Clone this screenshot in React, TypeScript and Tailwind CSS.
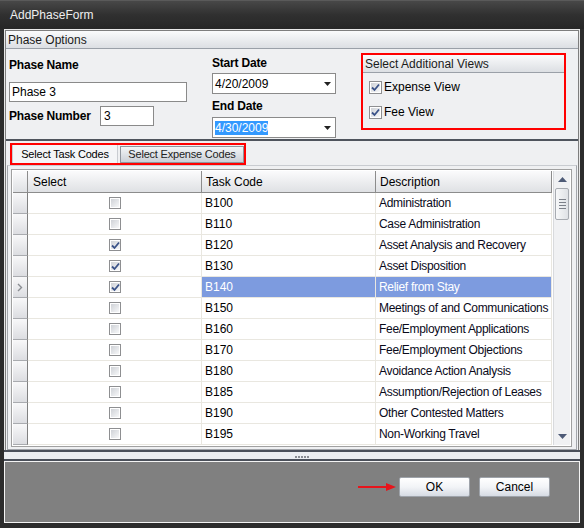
import React from 'react'

interface TaskRow {
  code: string
  desc: string
  checked: boolean
}

const rows: TaskRow[] = [
  { code: 'B100', desc: 'Administration', checked: false },
  { code: 'B110', desc: 'Case Administration', checked: false },
  { code: 'B120', desc: 'Asset Analysis and Recovery', checked: true },
  { code: 'B130', desc: 'Asset Disposition', checked: true },
  { code: 'B140', desc: 'Relief from Stay', checked: true },
  { code: 'B150', desc: 'Meetings of and Communications', checked: false },
  { code: 'B160', desc: 'Fee/Employment Applications', checked: false },
  { code: 'B170', desc: 'Fee/Employment Objections', checked: false },
  { code: 'B180', desc: 'Avoidance Action Analysis', checked: false },
  { code: 'B185', desc: 'Assumption/Rejection of Leases', checked: false },
  { code: 'B190', desc: 'Other Contested Matters', checked: false },
  { code: 'B195', desc: 'Non-Working Travel', checked: false },
]

const SELECTED = 'B140'

function CheckBox({ checked, big = false }: { checked: boolean; big?: boolean }) {
  return (
    <div
      className={`${big ? 'w-[13px] h-[13px]' : 'w-[12px] h-[12px]'} shrink-0 border border-[#8e8f91] bg-white p-[1px] flex`}
    >
      <div className="flex-1 bg-gradient-to-br from-[#cfd2d7] to-[#f7f8f9] flex items-center justify-center">
        {checked && (
          <svg width="9" height="9" viewBox="0 0 9 9">
            <path d="M1 4.5 L3.5 7 L8 1.5" fill="none" stroke="#3a5288" strokeWidth="1.8" />
          </svg>
        )}
      </div>
    </div>
  )
}

function HeaderBar({ children }: { children: React.ReactNode }) {
  return (
    <div className="h-[18px] shrink-0 flex items-center pl-[2px] bg-gradient-to-b from-[#fafbfc] to-[#dcdfe3] border-b border-[#9aa0a8] text-[12px] text-[#1b1b1b] whitespace-nowrap">
      {children}
    </div>
  )
}

function Combo({ value, selected = false }: { value: string; selected?: boolean }) {
  return (
    <div className="w-[124px] h-[21px] border border-[#8a8a8a] bg-white flex items-center pl-[2px] pr-[4px]">
      <span className={`text-[12px] leading-[14px] ${selected ? 'bg-[#3399ff] text-white' : 'text-black'}`}>{value}</span>
      <div className="flex-1" />
      <svg width="7" height="4" viewBox="0 0 7 4">
        <path d="M0 0 H7 L3.5 4 Z" fill="#222" />
      </svg>
    </div>
  )
}

function Button({ label }: { label: string }) {
  return (
    <button className="w-[71px] h-[20px] rounded-[2px] border border-[#9ea3aa] bg-gradient-to-b from-[#ffffff] via-[#f2f4f7] to-[#d6dbe3] text-[12px] text-black flex items-center justify-center">
      {label}
    </button>
  )
}

export default function App() {
  return (
    <div className="w-[584px] h-[528px] bg-[#2c2c2c] flex flex-col font-['Liberation_Sans',Arial,sans-serif] select-none">
      {/* Title */}
      <div className="h-[29px] shrink-0 flex items-center pl-[10px] bg-gradient-to-b from-[#484848] via-[#303030] to-[#262626] text-[12px] text-[#eeeeee] border-t border-[#5a5a5a]">
        AddPhaseForm
      </div>

      <div className="flex-1 flex flex-col px-[4px] pb-[5px]">
        {/* Top panel */}
        <div className="border border-[#e8e8e8] border-b-0 flex flex-col">
          <div className="border border-[#7e7e7e] border-b-0 bg-[#eff0f2] flex flex-col">
            <HeaderBar>Phase Options</HeaderBar>

            {/* Options */}
            <div className="h-[90px] flex pl-[3px]">
              <div className="w-[178px] flex flex-col">
                <div className="mt-[9px] h-[14px] text-[12px] font-bold leading-[14px] tracking-[-0.2px] text-black">Phase Name</div>
                <div className="mt-[10px] h-[20px] border border-[#8a8a8a] bg-white flex items-center pl-[2px] text-[12px] text-black">
                  Phase 3
                </div>
                <div className="mt-[4px] flex items-center">
                  <span className="w-[91px] text-[12px] font-bold tracking-[-0.2px] text-black">Phase Number</span>
                  <div className="w-[54px] h-[20px] border border-[#8a8a8a] bg-white flex items-center pl-[3px] text-[12px] text-black">
                    3
                  </div>
                </div>
              </div>

              <div className="ml-[25px] w-[124px] flex flex-col">
                <div className="mt-[7px] h-[14px] text-[12px] font-bold leading-[14px] tracking-[-0.2px] text-black">Start Date</div>
                <div className="mt-[3px]">
                  <Combo value="4/20/2009" />
                </div>
                <div className="mt-[5px] h-[14px] text-[12px] font-bold leading-[14px] tracking-[-0.2px] text-black">End Date</div>
                <div className="mt-[4px]">
                  <Combo value="4/30/2009" selected />
                </div>
              </div>

              <div className="ml-[25px] mt-[4px] w-[205px] h-[77px] border-2 border-[#ff0000] flex flex-col">
                <HeaderBar>Select Additional Views</HeaderBar>
                <div className="flex flex-col gap-[12px] pl-[6px] pt-[8px]">
                  <div className="h-[13px] flex items-center gap-[2px] text-[12px] leading-[13px] text-black">
                    <CheckBox checked big />
                    <span>Expense View</span>
                  </div>
                  <div className="h-[13px] flex items-center gap-[2px] text-[12px] leading-[13px] text-black">
                    <CheckBox checked big />
                    <span>Fee View</span>
                  </div>
                </div>
              </div>
            </div>

            <div className="h-[2px] bg-[#4f545d]" />

            {/* Tabs */}
            <div className="flex flex-col pl-[4px] pr-[1px] pt-[2px]">
              <div className="w-[236px] h-[22px] border-2 border-[#ff0000] flex items-end">
                <div className="w-[106px] h-[18px] self-start bg-[#f4f5f7] border-x border-[#c9ccd1] flex items-center justify-center text-[11px] tracking-[-0.2px] text-black whitespace-nowrap">
                  Select Task Codes
                </div>
                <div className="ml-[2px] w-[124px] h-[17px] border border-[#8f959d] bg-gradient-to-b from-[#f3f5f7] to-[#cbd0d7] flex items-center justify-center text-[11px] tracking-[-0.2px] text-[#222] whitespace-nowrap">
                  Select Expense Codes
                </div>
              </div>

              {/* Tab page */}
              <div className="-ml-[3px] border border-[#a3a6ab] border-t-[#c9ccd1] pt-[3px] pl-[3px] pr-[3px] pb-[2px] flex flex-col">
                <div className="w-[561px] border border-[#a0a0a0] bg-white p-[1px] flex">
                  <div className="flex-1 flex flex-col">
                    {/* Grid header */}
                    <div className="h-[22px] flex text-[12px] text-black">
                      <div className="w-[15px] bg-gradient-to-b from-[#fbfbfc] to-[#dfe1e4] border-r border-b border-[#8c8c8c]" />
                      <div className="w-[174px] pl-[5px] flex items-center bg-gradient-to-b from-[#fbfbfc] to-[#dfe1e4] border-r border-b border-[#8c8c8c]">
                        Select
                      </div>
                      <div className="w-[174px] pl-[4px] flex items-center bg-gradient-to-b from-[#fbfbfc] to-[#dfe1e4] border-r border-b border-[#8c8c8c]">
                        Task Code
                      </div>
                      <div className="flex-1 pl-[4px] flex items-center bg-gradient-to-b from-[#fbfbfc] to-[#dfe1e4] border-r border-b border-[#8c8c8c]">
                        Description
                      </div>
                    </div>

                    {/* Rows */}
                    {rows.map((r) => {
                      const sel = r.code === SELECTED
                      return (
                        <div key={r.code} className="h-[21px] flex text-[12px] leading-[14px]">
                          <div className="w-[15px] bg-gradient-to-b from-[#f8f8f9] to-[#dcdde1] border-r border-[#7f7f7f] border-b border-b-[#a9abaf] flex items-center justify-center">
                            {sel && (
                              <svg width="6" height="9" viewBox="0 0 6 9">
                                <path d="M1 1 L4.5 4.5 L1 8" fill="none" stroke="#8a8d92" strokeWidth="1.4" />
                              </svg>
                            )}
                          </div>
                          <div className="w-[174px] border-r border-b border-[#e9e7e0] flex items-center justify-center">
                            <CheckBox checked={r.checked} />
                          </div>
                          <div
                            className={`w-[174px] pl-[3px] border-r border-b border-[#e9e7e0] flex items-center ${sel ? 'bg-[#7d9bdf] text-white' : 'text-black'}`}
                          >
                            {r.code}
                          </div>
                          <div
                            className={`flex-1 min-w-0 pl-[3px] border-r border-b border-[#e9e7e0] flex items-center whitespace-nowrap overflow-hidden tracking-[-0.3px] ${sel ? 'bg-[#7d9bdf] text-white' : 'text-[#0a0a1a]'}`}
                          >
                            {r.desc}
                          </div>
                        </div>
                      )
                    })}
                  </div>

                  {/* Scrollbar */}
                  <div className="w-[17px] ml-[1px] bg-[#f0f1f3] border-l border-[#d8dadd] flex flex-col items-center">
                    <div className="h-[17px] flex items-center justify-center">
                      <svg width="9" height="5" viewBox="0 0 9 5">
                        <path d="M0 5 L4.5 0 L9 5 Z" fill="#4d5a76" />
                      </svg>
                    </div>
                    <div className="w-[14px] h-[32px] rounded-[2px] border border-[#a7abb1] bg-gradient-to-r from-[#f7f8f9] to-[#dfe2e6] flex flex-col items-center justify-center gap-[2px]">
                      <div className="w-[7px] h-[1px] bg-[#7b8089]" />
                      <div className="w-[7px] h-[1px] bg-[#7b8089]" />
                      <div className="w-[7px] h-[1px] bg-[#7b8089]" />
                      <div className="w-[7px] h-[1px] bg-[#7b8089]" />
                    </div>
                    <div className="flex-1" />
                    <div className="h-[17px] flex items-center justify-center">
                      <svg width="9" height="5" viewBox="0 0 9 5">
                        <path d="M0 0 L9 0 L4.5 5 Z" fill="#4d5a76" />
                      </svg>
                    </div>
                  </div>
                </div>
              </div>
            </div>
          </div>
        </div>

        {/* Splitter */}
        <div className="h-[11px] shrink-0 bg-[#eceef1] border-t-2 border-b-2 border-[#4b505a] flex items-end justify-center pb-[1px]">
          <div className="flex gap-[1px] ml-[20px]">
            {[0, 1, 2, 3, 4].map((i) => (
              <div key={i} className="w-[2px] h-[2px] bg-[#8a8d93]" />
            ))}
          </div>
        </div>

        {/* Bottom panel */}
        <div className="flex-1 border border-[#f4f4f4] bg-[#808080] flex items-start justify-end pt-[15px] pr-[29px]">
          <div className="flex items-center">
            <svg width="40" height="10" viewBox="0 0 40 10" className="mr-[1px]">
              <line x1="0" y1="5" x2="32" y2="5" stroke="#e8141b" strokeWidth="2" />
              <path d="M28 1 L38 5 L28 9 Z" fill="#e8141b" />
            </svg>
            <Button label="OK" />
            <div className="w-[9px]" />
            <Button label="Cancel" />
          </div>
        </div>
      </div>
    </div>
  )
}
